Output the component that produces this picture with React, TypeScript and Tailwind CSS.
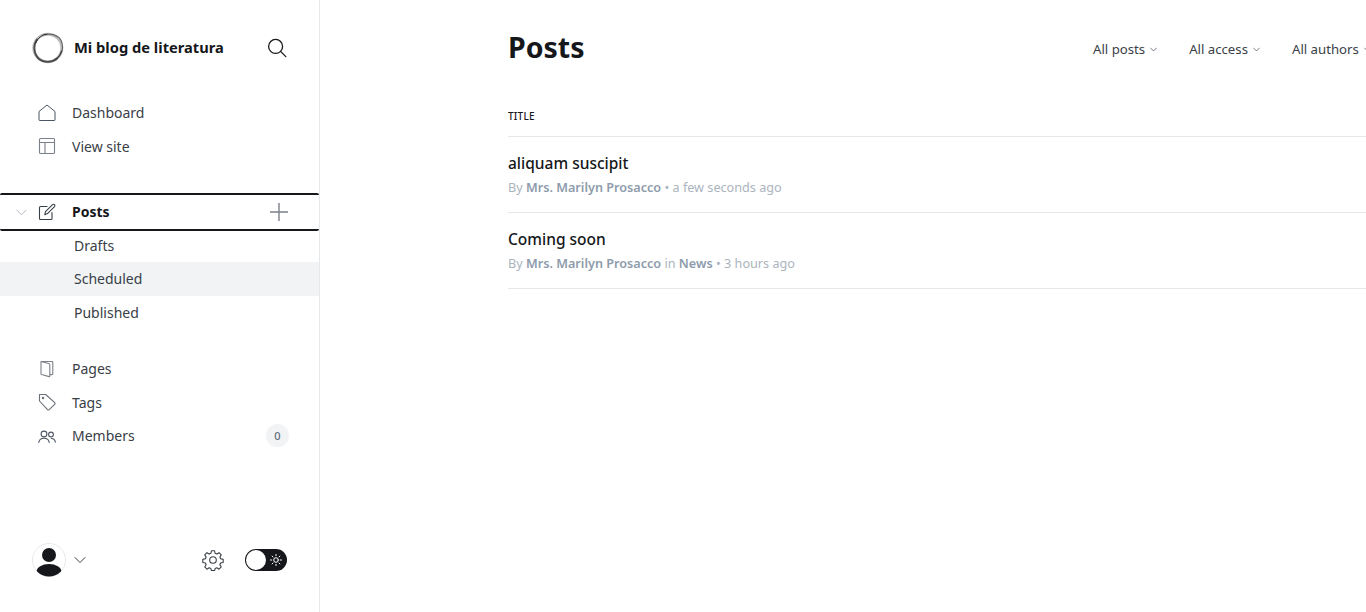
const fontStack = "font-['Noto_Sans',sans-serif]"

function Logo() {
  return (
    <svg width="32" height="32" viewBox="0 0 32 32" fill="none" className="shrink-0">
      <ellipse cx="15.800" cy="16" rx="14" ry="13.800" stroke="#bdbdbd" strokeWidth="3" />
      <path d="M5 7.500C1 13 1.500 22 7 27c5 4 13 3.800 18-.5" stroke="#4a4a4a" strokeWidth="1.800" strokeLinecap="round" />
      <path d="M12 2.600c7-1.600 14 .4 17 5.700 2.500 5.500 1.500 12-2.500 17" stroke="#6a6a6a" strokeWidth="1.200" strokeLinecap="round" />
      <path d="M3.800 11c2-5 6-8.400 11-8.800M29.500 19c-1 3-2.500 5.800-5.500 7.800" stroke="#2e2e2e" strokeWidth="1" strokeLinecap="round" />
    </svg>
  )
}

function SearchIcon() {
  return (
    <svg width="20" height="20" viewBox="0 0 20 20" fill="none" stroke="#15171a" strokeWidth="1.300" strokeLinecap="round">
      <circle cx="8.600" cy="8.400" r="7" />
      <path d="M13.600 13.400l5.200 5.200" />
    </svg>
  )
}

function HomeIcon() {
  return (
    <svg width="18" height="18" viewBox="0 0 18 18" fill="none" stroke="#4b5563" strokeWidth="1" strokeLinejoin="round">
      <path d="M1.500 16.500h15a.5.5 0 0 0 .5-.5V7.500L9 1 1 7.500V16a.5.500 0 0 0 .5.5z" />
    </svg>
  )
}

function LayoutIcon() {
  return (
    <svg width="18" height="18" viewBox="0 0 18 18" fill="none" stroke="#7c8088" strokeWidth="1.100">
      <rect x="1.500" y="1.500" width="15" height="15" rx="1" />
      <path d="M1.500 5.500h15M7 5.500v11" />
    </svg>
  )
}

function PostsIcon() {
  return (
    <svg width="18" height="18" viewBox="0 0 18 18" fill="none" stroke="#394047" strokeWidth="1.100" strokeLinejoin="round" strokeLinecap="round">
      <path d="M9 3.500H2.500a1 1 0 0 0-1 1v11a1 1 0 0 0 1 1h10.500a1 1 0 0 0 1-1V9.500" />
      <path d="M6.800 11.700l.7-3L14.500 1.600a1.400 1.400 0 0 1 2 0 1.400 1.400 0 0 1 0 2l-7 7z" />
    </svg>
  )
}

function PagesIcon() {
  return (
    <svg width="18" height="18" viewBox="0 0 18 18" fill="none" stroke="#7c8088" strokeWidth="1.100" strokeLinejoin="round">
      <path d="M3 1.500h11a.8.8 0 0 1 .8.8v11.500a.8.8 0 0 1-.8.8h-2" />
      <path d="M3 1.500l7.800 2a1 1 0 0 1 1 1V16a.6.600 0 0 1-.8.600L3.700 14.500a1 1 0 0 1-.7-1z" />
    </svg>
  )
}

function TagIcon() {
  return (
    <svg width="18" height="18" viewBox="0 0 18 18" fill="none" stroke="#6b7079" strokeWidth="1.100" strokeLinejoin="round">
      <path d="M1.500 1.500h6.200l9 8.200a1.200 1.200 0 0 1 0 1.700l-5.500 5.300a1.200 1.200 0 0 1-1.700 0L1.500 8z" />
      <circle cx="5" cy="5" r=".7" />
    </svg>
  )
}

function MembersIcon() {
  return (
    <svg width="18" height="18" viewBox="0 0 18 18" fill="none" stroke="#4b5563" strokeWidth="1.100" strokeLinecap="round">
      <circle cx="6" cy="7" r="2.900" />
      <path d="M.8 15.500c.3-2.800 2.400-4.200 5.200-4.200s4.900 1.400 5.200 4.200" />
      <circle cx="13" cy="7.500" r="2.400" />
      <path d="M13.300 11.500c2.200 0 3.700 1.300 4 3.600" />
    </svg>
  )
}

function GearIcon() {
  return (
    <svg width="22" height="22" viewBox="0 0 24 24" fill="none" stroke="#394047" strokeWidth="1.200" strokeLinejoin="round">
      <path d="M10.300 2.500h3.400l.6 2.800 1.900.8 2.400-1.500 2.400 2.400-1.500 2.400.8 1.900 2.800.6v3.400l-2.800.6-.8 1.900 1.500 2.400-2.400 2.400-2.400-1.500-1.900.8-.6 2.300h-3.400l-.6-2.300-1.900-.8-2.400 1.500-2.400-2.400 1.500-2.400-.8-1.900-2.800-.6v-3.400l2.800-.6.8-1.900-1.500-2.400 2.400-2.400 2.400 1.500 1.900-.8z" transform="translate(0 -.6)" />
      <circle cx="12" cy="12" r="3.600" />
    </svg>
  )
}

function Chevron({ size, color, width = 1.2 }: { size: number; color: string; width?: number }) {
  return (
    <svg width={size} height={size} viewBox="0 0 12 12" fill="none" stroke={color} strokeWidth={width} strokeLinecap="round" strokeLinejoin="round">
      <path d="M1 3.500l5 5 5-5" />
    </svg>
  )
}

function NavItem({ icon, label, children }: { icon: React.ReactNode; label: string; children?: React.ReactNode }) {
  return (
    <div className="flex h-[33.5px] items-center pr-[30px] pl-[38px]">
      <span className="flex w-[34px] shrink-0">{icon}</span>
      <span className="text-[14px] text-[#394047]">{label}</span>
      {children}
    </div>
  )
}

function SubItem({ label, active }: { label: string; active?: boolean }) {
  return (
    <div className={`flex h-[33.5px] items-center pl-[74px] text-[14px] text-[#394047] ${active ? "bg-[#f1f3f4]" : ""}`}>
      {label}
    </div>
  )
}

function Filter({ label }: { label: string }) {
  return (
    <div className="flex shrink-0 items-center gap-[5px] text-[13.2px] text-[#394047]">
      {label}
      <Chevron size={7} color="#626d79" width={1.500} />
    </div>
  )
}

function PostRow({ title, tag, time }: { title: string; tag?: string; time: string }) {
  return (
    <div className="flex h-[76px] flex-col border-b border-[#e6e9eb] pt-[14px]">
      <h3 className="text-[15.500px] leading-[24px] font-medium text-[#15171a]">{title}</h3>
      <p className="mt-[1.500px] text-[12.650px] leading-[20px] text-[#abb4be]">
        By <span className="font-semibold text-[#8e9cac]">Mrs. Marilyn Prosacco</span>
        {tag && (
          <>
            {" "}in <span className="font-semibold text-[#8e9cac]">{tag}</span>
          </>
        )}
        {" "}• {time}
      </p>
    </div>
  )
}

export default function App() {
  return (
    <div className={`flex h-[612px] w-[1366px] overflow-hidden bg-white ${fontStack}`}>
      {/* Sidebar */}
      <aside className="flex w-[320px] shrink-0 flex-col border-r border-[#e6e9eb]">
        <div className="flex h-[96px] items-center px-[32px]">
          <Logo />
          <span className="mb-[1px] ml-[10px] text-[14.700px] font-bold text-[#15171a]">Mi blog de literatura</span>
          <span className="ml-auto flex"><SearchIcon /></span>
        </div>

        <nav>
          <NavItem icon={<HomeIcon />} label="Dashboard" />
          <NavItem icon={<LayoutIcon />} label="View site" />
        </nav>

        <div className="mt-[30px] mb-[-2.500px] flex h-[38px] items-center rounded-[2px] border-y-2 border-[#15171a] pr-[31px] pl-[16px]">
          <span className="flex w-[22px]"><Chevron size={11} color="#aeb4ba" width={1} /></span>
          <span className="flex w-[34px]"><PostsIcon /></span>
          <span className="mb-[1px] text-[14px] font-bold text-[#15171a]">Posts</span>
          <svg width="18" height="18" viewBox="0 0 18 18" stroke="#7c8088" strokeWidth="1.400" className="ml-auto">
            <path d="M9 0v18M0 9h18" />
          </svg>
        </div>
        <SubItem label="Drafts" />
        <SubItem label="Scheduled" active />
        <SubItem label="Published" />

        <nav className="mt-[23px]">
          <NavItem icon={<PagesIcon />} label="Pages" />
          <NavItem icon={<TagIcon />} label="Tags" />
          <NavItem icon={<MembersIcon />} label="Members">
            <span className="ml-auto flex size-[23px] items-center justify-center rounded-full bg-[#f1f3f4] text-[11px] font-medium text-[#626d79]">0</span>
          </NavItem>
        </nav>

        <div className="mt-auto mb-[35px] flex items-center px-[32px]">
          <svg width="34" height="34" viewBox="0 0 34 34" className="shrink-0">
            <defs>
              <clipPath id="avatar"><circle cx="17" cy="17" r="16.500" /></clipPath>
            </defs>
            <circle cx="17" cy="17" r="16.500" fill="#fff" stroke="#e6e9eb" />
            <g clipPath="url(#avatar)" fill="#15171a">
              <circle cx="17" cy="12" r="7" />
              <ellipse cx="17" cy="29" rx="12.500" ry="8" />
            </g>
          </svg>
          <span className="ml-[8px] flex"><Chevron size={12} color="#394047" width={1} /></span>
          <span className="ml-auto flex"><GearIcon /></span>
          <div className="ml-[21px] flex h-[22px] w-[42px] items-center rounded-full bg-[#15171a] pl-[1px]">
            <span className="size-[20px] rounded-full bg-white" />
            <svg width="12" height="12" viewBox="0 0 12 12" stroke="#fff" strokeWidth="1" strokeLinecap="round" fill="none" className="ml-[3.500px]">
              <circle cx="6" cy="6" r="2.300" />
              <path d="M6 .5v1.200M6 10.300v1.200M.5 6h1.200M10.300 6h1.200M2.100 2.100l.9.9M9 9l.9.9M2.100 9.900L3 9M9 3l.9-.9" />
            </svg>
          </div>
        </div>
      </aside>

      {/* Main */}
      <main className="w-[1046px] shrink-0 pl-[188px]">
        <div className="flex h-[96px] w-[900px] items-center">
          <h1 className="mb-[2px] w-[76px] text-[28.500px] font-bold text-[#15171a]">Posts</h1>
          <div className="ml-[509px] flex gap-[32px] pt-[4px]">
            <Filter label="All posts" />
            <Filter label="All access" />
            <Filter label="All authors" />
          </div>
        </div>
        <div className="flex h-[41px] items-center border-b border-[#e6e9eb] pt-[1px] text-[10px] font-medium tracking-[0.2px] text-[#15171a]">
          TITLE
        </div>
        <PostRow title="aliquam suscipit" time="a few seconds ago" />
        <PostRow title="Coming soon" tag="News" time="3 hours ago" />
      </main>
    </div>
  )
}
